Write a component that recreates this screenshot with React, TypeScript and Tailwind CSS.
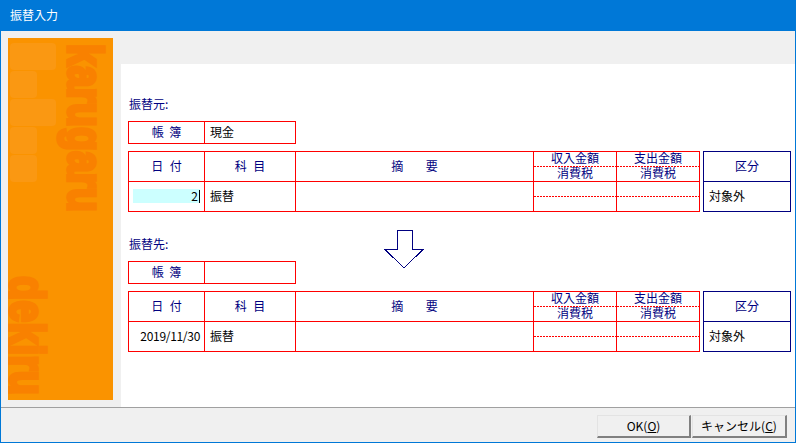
const jp = "font-['Noto_Sans_CJK_JP','Liberation_Sans',sans-serif]";

function DottedLine() {
  return <div className="h-px bg-[repeating-linear-gradient(90deg,#ff0000_0_2px,transparent_2px_3px)]" />;
}

function AccountTable({ value }: { value: string }) {
  return (
    <div className="flex h-[23px] w-[168px] border border-[#ff0000] leading-[19px]">
      <div className="w-[76px] shrink-0 border-r border-[#ff0000] text-center text-[#000080] [word-spacing:3px]">帳 簿</div>
      <div className="pl-[5px] text-black">{value}</div>
    </div>
  );
}

function MoneyHead({ top, className }: { top: string; className: string }) {
  return (
    <div className={className}>
      <div className="h-[14px] text-center leading-[12px]">{top}</div>
      <DottedLine />
      <div className="text-center leading-[12px]">消費税</div>
    </div>
  );
}

function EntryRow({ date, category }: { date: React.ReactNode; category: string }) {
  return (
    <div className="flex gap-[3px]">
      <div className="grid h-[61px] w-[572px] grid-cols-[76px_91px_238px_83px_82px] grid-rows-[30px_29px] border border-[#ff0000]">
        <div className="flex items-center justify-center border-r border-b border-[#ff0000] pb-[2px] text-[#000080] [word-spacing:4px]">日 付</div>
        <div className="flex items-center justify-center border-r border-b border-[#ff0000] pb-[2px] text-[#000080] [word-spacing:4px]">科 目</div>
        <div className="flex items-center justify-center border-r border-b border-[#ff0000] pb-[2px] text-[#000080] [word-spacing:20px]">摘 要</div>
        <MoneyHead top="収入金額" className="border-r border-b border-[#ff0000] text-[#000080]" />
        <MoneyHead top="支出金額" className="border-b border-[#ff0000] text-[#000080]" />
        <div className="flex items-center justify-end border-r border-[#ff0000] pr-[4px] text-black">{date}</div>
        <div className="flex items-center border-r border-[#ff0000] pb-[2px] pl-[5px] text-black">{category}</div>
        <div className="border-r border-[#ff0000]" />
        <div className="border-r border-[#ff0000] pt-[14px]">
          <DottedLine />
        </div>
        <div className="pt-[14px]">
          <DottedLine />
        </div>
      </div>
      <div className="grid h-[61px] w-[88px] grid-rows-[30px_29px] border border-[#000080]">
        <div className="flex items-center justify-center border-b border-[#000080] pb-[2px] text-[#000080]">区分</div>
        <div className="flex items-center pb-[2px] pl-[5px] text-black">対象外</div>
      </div>
    </div>
  );
}

function SideLogo() {
  return (
    <div className="relative h-[362px] w-[105px] shrink-0 bg-[#fa9300]">
      <div className="flex flex-col gap-px pl-[2px] pt-[5px]">
        <div className="h-[27px] w-[46px] rounded-[4px] bg-[#fa9812]" />
        <div className="h-[27px] w-[27px] rounded-[4px] bg-[#fa9812]" />
        <div className="h-[27px] w-[46px] rounded-[4px] bg-[#fa9812]" />
        <div className="h-[27px] w-[27px] rounded-[4px] bg-[#fa9812]" />
        <div className="h-[27px] w-[27px] rounded-[4px] bg-[#fa9812]" />
      </div>
      <svg className="absolute inset-0" width="105" height="362" viewBox="0 0 105 362">
        <g fill="#f98100" stroke="#f98100" strokeWidth="3.5" fontFamily="Liberation Sans" fontWeight="700" fontSize="50">
          <text transform="translate(60,6) rotate(90)" textLength="168" lengthAdjust="spacingAndGlyphs">karugaru</text>
          <text transform="translate(2,238) rotate(90)" textLength="119" lengthAdjust="spacingAndGlyphs">dekiru</text>
        </g>
      </svg>
    </div>
  );
}

export default function App() {
  return (
    <div className={`flex h-[443px] w-[796px] flex-col overflow-hidden border-x border-b border-[#0078d7] bg-[#f0f0f0] text-[12px] ${jp}`}>
      <div className="flex h-[31px] shrink-0 items-center bg-[#0078d7] pl-[9px] pb-[1px] text-[12px] text-white">振替入力</div>

      <div className="flex min-h-0 flex-1">
        <div className="w-[120px] shrink-0 pl-[7px] pt-[7px]">
          <SideLogo />
        </div>
        <div className="flex flex-1 flex-col pt-[33px]">
          <div className="flex-1 bg-white pl-[7px] pt-[33px]">
            <div className="h-[14px] pl-px leading-[14px] text-[#000080]">振替元:</div>
            <div className="mt-[10px]">
              <AccountTable value="現金" />
            </div>
            <div className="mt-[7px]">
              <EntryRow
                date={
                  <div className="mb-[1px] flex h-[14px] w-[67px] items-center justify-end bg-[#ccffff] leading-[12px]">
                    2<span className="ml-px h-[13px] w-px bg-black" />
                  </div>
                }
                category="振替"
              />
            </div>

            <div className="mt-[18px] flex">
              <div className="w-[168px] pt-[7px]">
                <div className="h-[14px] pl-px leading-[14px] text-[#000080]">振替先:</div>
                <div className="mt-[10px]">
                  <AccountTable value="" />
                </div>
              </div>
              <svg className="ml-[88px]" width="40" height="39" viewBox="0 0 40 39" shapeRendering="crispEdges">
                <polygon points="13,0.5 28.5,0.5 28.5,19.5 39,19.5 20,38 1,19.5 13,19.5" fill="white" stroke="#000080" strokeWidth="1" />
              </svg>
            </div>
            <div className="mt-[7px]">
              <EntryRow date={<span className="mb-[2px] tracking-[-0.3px]">2019/11/30</span>} category="振替" />
            </div>
          </div>
        </div>
      </div>

      <div className="flex h-[35px] shrink-0 justify-end gap-px border-t border-[#a0a0a0] pr-[8px] pt-[7px]">
        <button className="h-[23px] w-[94px] border-t border-l border-[#e3e3e3] border-r-2 border-b-2 border-r-[#808080] border-b-[#808080] text-black">
          OK(<span className="underline">O</span>)
        </button>
        <button className="h-[23px] w-[95px] border-t border-l border-[#e3e3e3] border-r-2 border-b-2 border-r-[#808080] border-b-[#808080] text-black">
          キャンセル(<span className="underline">C</span>)
        </button>
      </div>
    </div>
  );
}
